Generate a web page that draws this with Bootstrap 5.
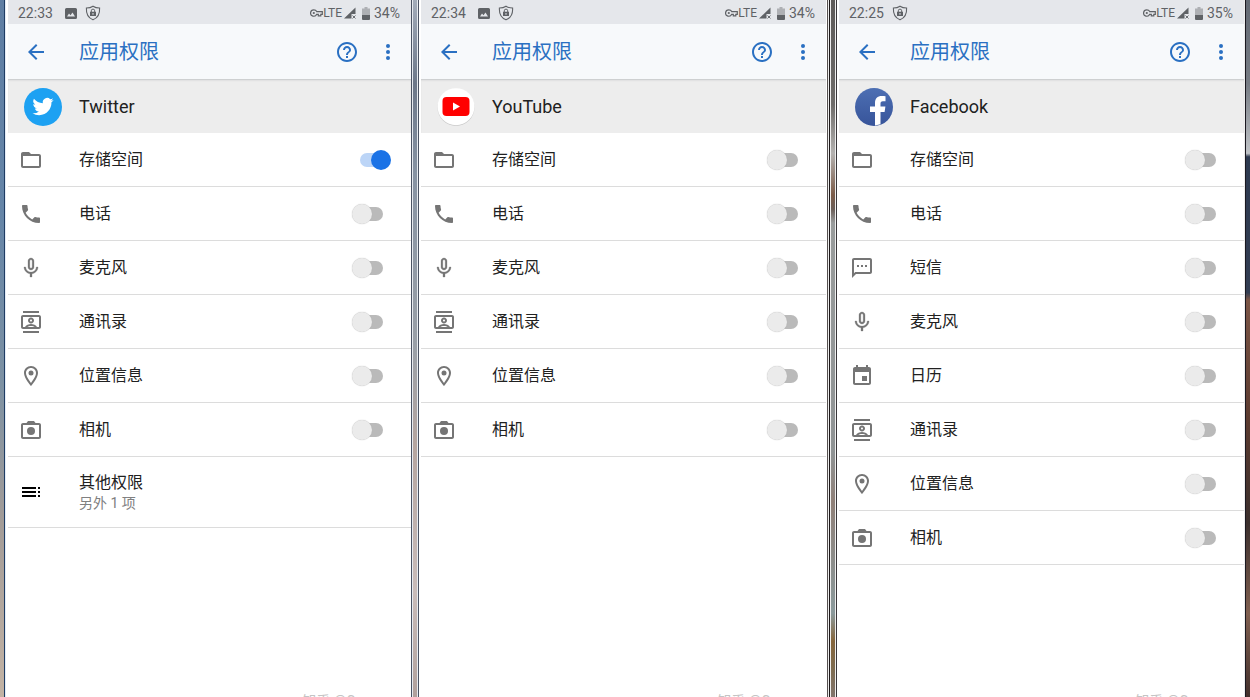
<!DOCTYPE html>
<html lang="zh-CN">
<head>
<meta charset="utf-8">
<meta name="viewport" content="width=device-width, initial-scale=1">
<title>应用权限</title>
<link rel="stylesheet" href="https://cdn.jsdelivr.net/npm/bootstrap@5.3.0/dist/css/bootstrap.min.css">
<style>
  body { font-family: Roboto, "Noto Sans CJK SC", sans-serif; color: #212121; background: #fff; }
  svg { display: block; flex: none; fill: currentColor; }
  .ico { width: 24px; height: 24px; }

  /* edges between the phones */
  .edge { flex: none; }
  .edge-start { width: 6px; border-right: 1px solid #e4ecf6; background: linear-gradient(90deg, transparent 4px, #1f3c63 4px), linear-gradient(#5f7ea3, #6585a8 30%, #7d91a3 55%, #a39c98 75%, #c3b3a4); }
  .edge-mid { width: 8px; border: solid #4a5263; border-width: 0 1px; background: linear-gradient(90deg, #e6eaf0 1px, transparent 1px 5px, #e6eaf0 5px), linear-gradient(#a3acba, #6c7789 12%, #8793a3 25%, #9aa0a8 50%, #b5a5a0 64%, #c9bcba 85%, #b0a09c); }
  .edge-dark { width: 11px; background: linear-gradient(90deg, #fff 1px, #55504f 1px 2px, #eee 2px 3px, #1e1a1a 3px 4px, #eee 4px 5px, transparent 5px 9px, #eee 9px 10px, #39373a 10px), linear-gradient(#5d5a58, #6d6b69 15%, #b4b2b0 22%, #7b5b48 28%, #6a5d57 30%, #999c9c 32%, #8f9394 65%, #8f8078 72%, #8b9a9c 88%, #85653b 92%, #7e6c50 96%, #82756d); }
  .edge-end { width: 6px; background: linear-gradient(90deg, #eee 1px, #1a1820 1px 2px, transparent 2px), linear-gradient(#636973, #777c84 12%, #c0c3c7 22%, #2e3a50 22.5%, #333d52 42%, #7b5546 43%, #5c3b30 60%, #3b2f2d 75%, #805f50 88%, #43302c); }

  .phone { flex-basis: 0; flex-shrink: 1; min-width: 0; padding-left: 2px; background: #fff; }
  .phone-a { flex-grow: 405; }
  .phone-b { flex-grow: 407; }

  .status { height: 24px; padding: 2px 11px 0 10px; background: #e5e7eb; color: #5f6266; font-size: 14px; line-height: 20px; }
  .status .net { font-size: 12px; margin-right: 2px; }
  .status .pic { margin-left: 12px; }
  .status .batt { margin: 0 4px 0 6px; }
  .appbar { height: 55px; padding: 0 11px 0 16px; background: #f7f9fb; color: #2a70c2; }
  .appbar h1 { font-size: 20px; line-height: 28px; font-weight: 400; margin: 0 0 0 31px; }
  .bar-btn { border: 0; padding: 0; background: none; color: inherit; }
  .bar-btn + .bar-btn { margin-left: 17px; }
  .who { height: 54px; padding: 1px 16px 0; background: #ededed; box-shadow: inset 0 2px 2px -1px #c4c6c8; }
  .who h2 { font-size: 18px; line-height: 24px; font-weight: 400; margin: 0 0 0 17px; padding-top: 1px; }

  .perm { height: 54px; padding: 0 20px 0 11px; border-bottom: 1px solid #dcdcdc; color: #757575; }
  .perm label, .perm a { margin-left: 36px; font-size: 16px; line-height: 22px; color: #212121; text-decoration: none; }
  .perm label { padding-top: 1px; }
  .perm-more { height: 71px; }
  .perm-more .ico { color: #000; }
  .perm-more small { display: block; font-size: 14px; line-height: 18px; color: #808080; }

  .perm .perm-switch { position: relative; flex: none; width: 39px; height: 20px; margin: 0; border: 0; background: none; }
  .perm-switch::before { content: ""; position: absolute; left: 8px; top: 3px; width: 23px; height: 14px; border-radius: 7px; background: #bababa; }
  .perm-switch::after { content: ""; position: absolute; left: 0; top: 0; width: 20px; height: 20px; border-radius: 50%; background: #ebebeb; box-shadow: 0 0 1px #aaa; }
  .perm-switch:checked::before { background: #bcd5f7; }
  .perm-switch:checked::after { left: 19px; background: #1a72e6; box-shadow: none; }

  .mark-zh { right: 48px; bottom: -14px; font-size: 14px; line-height: 20px; color: #c4c4c4; }
</style>
</head>
<body>
<svg width="0" height="0" class="position-absolute" aria-hidden="true">
  <symbol id="back" viewBox="0 0 24 24"><path d="M20 11H7.83l5.59-5.59L12 4l-8 8 8 8 1.41-1.41L7.83 13H20v-2z"/></symbol>
  <symbol id="help" viewBox="0 0 24 24"><path d="M11 18h2v-2h-2v2zm1-16C6.48 2 2 6.48 2 12s4.48 10 10 10 10-4.48 10-10S17.52 2 12 2zm0 18c-4.41 0-8-3.59-8-8s3.59-8 8-8 8 3.59 8 8-3.59 8-8 8zm0-14c-2.21 0-4 1.79-4 4h2c0-1.1.9-2 2-2s2 .9 2 2c0 2-3 1.75-3 5h2c0-2.25 3-2.5 3-5 0-2.21-1.79-4-4-4z"/></symbol>
  <symbol id="more" viewBox="0 0 24 24"><circle cx="12" cy="6" r="2"/><circle cx="12" cy="12" r="2"/><circle cx="12" cy="18" r="2"/></symbol>
  <symbol id="folder" viewBox="0 0 24 24"><path fill-rule="evenodd" d="M20 6h-8l-2-2H4c-1.100 0-2 .9-2 2v12c0 1.100.9 2 2 2h16c1.100 0 2-.9 2-2V8c0-1.100-.9-2-2-2zm0 12H4V8h16v10z"/></symbol>
  <symbol id="call" viewBox="0 0 24 24"><path d="M6.620 10.790c1.440 2.830 3.760 5.140 6.590 6.590l2.200-2.200c.27-.27.670-.36 1.020-.24 1.120.37 2.330.57 3.570.57.55 0 1 .45 1 1V20c0 .55-.45 1-1 1-9.390 0-17-7.610-17-17 0-.55.45-1 1-1h3.500c.55 0 1 .45 1 1 0 1.250.2 2.450.57 3.570.11.35.03.74-.25 1.020l-2.200 2.200z"/></symbol>
  <symbol id="mic" viewBox="0 0 24 24"><path d="M12 14c1.660 0 3-1.340 3-3V5c0-1.660-1.340-3-3-3S9 3.340 9 5v6c0 1.660 1.340 3 3 3zm-1.200-9.100c0-.66.54-1.200 1.200-1.200s1.200.54 1.200 1.200l-.01 6.200c0 .66-.53 1.200-1.190 1.200s-1.200-.54-1.200-1.200V4.900zm6.500 6.100c0 3-2.540 5.100-5.300 5.100S6.700 14 6.700 11H5c0 3.410 2.720 6.230 6 6.720V21h2v-3.280c3.280-.48 6-3.300 6-6.720h-1.700z" stroke="currentColor" stroke-width=".3"/></symbol>
  <symbol id="contacts" viewBox="0 0 24 24"><path d="M4 1h16v2H4zM4 21h16v2H4zM20 5H4c-1.100 0-2 .9-2 2v10c0 1.100.9 2 2 2h16c1.100 0 2-.9 2-2V7c0-1.100-.9-2-2-2zM8.210 17c.7-.47 2.250-1 3.790-1 1.550 0 3.090.53 3.790 1H8.210zM20 17h-2c-.7-1.990-3.970-3-6-3s-5.300 1.010-6 3H4V7h16v10z"/><path d="M12 13.500c1.650 0 3-1.350 3-3s-1.350-3-3-3-3 1.350-3 3 1.350 3 3 3zm0-4c.55 0 1 .45 1 1s-.45 1-1 1-1-.45-1-1 .45-1 1-1z"/></symbol>
  <symbol id="place" viewBox="0 0 24 24"><path d="M12 2C8.130 2 5 5.130 5 9c0 5.250 7 13 7 13s7-7.750 7-13c0-3.870-3.130-7-7-7zM7 9c0-2.760 2.240-5 5-5s5 2.240 5 5c0 2.880-2.880 7.190-5 9.880C9.920 16.210 7 11.850 7 9z"/><circle cx="12" cy="9" r="2.500"/></symbol>
  <symbol id="camera" viewBox="0 0 24 24"><path fill-rule="evenodd" d="M9 3h6l1.500 2H20c1.100 0 2 .9 2 2v12c0 1.100-.9 2-2 2H4c-1.100 0-2-.9-2-2V7c0-1.100.9-2 2-2h3.500zM4 7v12h16V7z"/><circle cx="12" cy="13" r="4"/></symbol>
  <symbol id="sms" viewBox="0 0 24 24"><path fill-rule="evenodd" d="M20 2H4c-1.100 0-2 .9-2 2v18l4-4h14c1.100 0 2-.9 2-2V4c0-1.100-.9-2-2-2zm0 14H5.200L4 17.200V4h16z"/><path d="M7 9h2v2H7zM11 9h2v2h-2zM15 9h2v2h-2z"/></symbol>
  <symbol id="event" viewBox="0 0 24 24"><path d="M17 12h-5v5h5v-5zM16 1v2H8V1H6v2H5c-1.110 0-1.990.9-1.990 2L3 19c0 1.100.89 2 2 2h14c1.100 0 2-.9 2-2V5c0-1.100-.9-2-2-2h-1V1h-2zm3 18H5V8h14v11z"/></symbol>
  <symbol id="toc" viewBox="0 0 24 24"><path d="M3 9h14V7H3v2zm0 4h14v-2H3v2zm0 4h14v-2H3v2zm16 0h2v-2h-2v2zm0-10v2h2V7h-2zm0 6h2v-2h-2v2z"/></symbol>
  <symbol id="pic" viewBox="0 0 12 11"><path fill-rule="evenodd" d="M1.500 0h9Q12 0 12 1.500v8Q12 11 10.500 11h-9Q0 11 0 9.500v-8Q0 0 1.500 0zM2 8.500h8L7.500 4.500 5.500 7.200 4 5.500z"/></symbol>
  <symbol id="shield" viewBox="0 0 16 16"><path d="M8 1.200C6 2.600 3.800 3 1.400 3c-.3 5 .8 9.500 6.600 11.800C13.800 12.500 14.900 8 14.600 3 12.200 3 10 2.600 8 1.200z" fill="none" stroke="currentColor" stroke-width="1.100"/><path d="M6.300 7V5.800a1.700 1.700 0 0 1 3.400 0V7" fill="none" stroke="currentColor" stroke-width="1"/><path fill-rule="evenodd" d="M5 6.700h6v4.300H5zM7.500 8v1.800h1V8z"/></symbol>
  <symbol id="vpn" viewBox="0 0 13 8"><path d="M3.800.8a3.200 3.200 0 1 0 2.900 4.500h1.600v1.600h2.500V5.300h1.500V2.600H6.700A3.200 3.200 0 0 0 3.800.8z" fill="none" stroke="currentColor" stroke-width="1.200"/><circle cx="3.800" cy="4" r="1.100"/></symbol>
  <symbol id="signal" viewBox="0 0 12 12"><path d="M11.500.5V7H7.500v4.500H0z"/><path d="M8.500 8.500l3 3M11.500 8.500l-3 3" stroke="currentColor" stroke-width=".9"/></symbol>
  <symbol id="battery" viewBox="0 0 8 13"><path d="M2.500 0h3v1.500H8V8H0V1.500h2.500z" fill="#aeb0b4"/><path d="M0 8h8v4q0 1-1 1H1q-1 0-1-1z"/></symbol>
</svg>

<div class="d-flex min-vh-100">
  <div class="edge edge-start"></div>

  <section class="phone phone-a position-relative overflow-hidden">
    <div class="status d-flex align-items-center">
      <span>22:33</span>
      <svg width="12" height="11" class="pic"><use href="#pic"/></svg>
      <svg width="16" height="16" class="ms-2"><use href="#shield"/></svg>
      <svg width="13" height="8" class="ms-auto"><use href="#vpn"/></svg>
      <span class="net">LTE</span>
      <svg width="12" height="12"><use href="#signal"/></svg>
      <svg width="8" height="13" class="batt"><use href="#battery"/></svg>
      <span>34%</span>
    </div>
    <header class="appbar d-flex align-items-center">
      <button class="bar-btn" type="button" aria-label="返回"><svg class="ico"><use href="#back"/></svg></button>
      <h1>应用权限</h1>
      <button class="bar-btn ms-auto" type="button" aria-label="帮助"><svg class="ico"><use href="#help"/></svg></button>
      <button class="bar-btn" type="button" aria-label="更多"><svg class="ico"><use href="#more"/></svg></button>
    </header>
    <div class="who d-flex align-items-center">
      <svg width="38" height="38" viewBox="0 0 38 38"><circle cx="19" cy="19" r="19" fill="#1da1f2"/><path transform="translate(8.500 8) scale(.88)" fill="#fff" d="M23.950 4.570a10 10 0 0 1-2.820.77 4.960 4.960 0 0 0 2.160-2.720c-.95.55-2 .95-3.130 1.180a4.920 4.920 0 0 0-8.380 4.480C7.690 8.100 4.070 6.130 1.640 3.160a4.920 4.920 0 0 0 1.520 6.570 4.900 4.900 0 0 1-2.230-.61v.06a4.920 4.920 0 0 0 3.950 4.830 5 5 0 0 1-2.210.08 4.940 4.940 0 0 0 4.600 3.420A9.870 9.870 0 0 1 0 19.540a13.990 13.990 0 0 0 7.550 2.210c9.050 0 14-7.500 14-13.980 0-.21 0-.42-.02-.63a9.940 9.940 0 0 0 2.460-2.550z"/></svg>
      <h2>Twitter</h2>
    </div>
    <ul class="list-unstyled mb-0">
      <li class="perm d-flex align-items-center"><svg class="ico"><use href="#folder"/></svg><label for="a1">存储空间</label><input class="form-check-input perm-switch ms-auto" type="checkbox" role="switch" id="a1" checked></li>
      <li class="perm d-flex align-items-center"><svg class="ico"><use href="#call"/></svg><label for="a2">电话</label><input class="form-check-input perm-switch ms-auto" type="checkbox" role="switch" id="a2"></li>
      <li class="perm d-flex align-items-center"><svg class="ico"><use href="#mic"/></svg><label for="a3">麦克风</label><input class="form-check-input perm-switch ms-auto" type="checkbox" role="switch" id="a3"></li>
      <li class="perm d-flex align-items-center"><svg class="ico"><use href="#contacts"/></svg><label for="a4">通讯录</label><input class="form-check-input perm-switch ms-auto" type="checkbox" role="switch" id="a4"></li>
      <li class="perm d-flex align-items-center"><svg class="ico"><use href="#place"/></svg><label for="a5">位置信息</label><input class="form-check-input perm-switch ms-auto" type="checkbox" role="switch" id="a5"></li>
      <li class="perm d-flex align-items-center"><svg class="ico"><use href="#camera"/></svg><label for="a6">相机</label><input class="form-check-input perm-switch ms-auto" type="checkbox" role="switch" id="a6"></li>
      <li class="perm perm-more d-flex align-items-center"><svg class="ico"><use href="#toc"/></svg><a href="#">其他权限<small>另外 1 项</small></a></li>
    </ul>
    <span class="mark-zh position-absolute">知乎 @Ca</span>
  </section>

  <div class="edge edge-mid"></div>

  <section class="phone phone-b position-relative overflow-hidden">
    <div class="status d-flex align-items-center">
      <span>22:34</span>
      <svg width="12" height="11" class="pic"><use href="#pic"/></svg>
      <svg width="16" height="16" class="ms-2"><use href="#shield"/></svg>
      <svg width="13" height="8" class="ms-auto"><use href="#vpn"/></svg>
      <span class="net">LTE</span>
      <svg width="12" height="12"><use href="#signal"/></svg>
      <svg width="8" height="13" class="batt"><use href="#battery"/></svg>
      <span>34%</span>
    </div>
    <header class="appbar d-flex align-items-center">
      <button class="bar-btn" type="button" aria-label="返回"><svg class="ico"><use href="#back"/></svg></button>
      <h1>应用权限</h1>
      <button class="bar-btn ms-auto" type="button" aria-label="帮助"><svg class="ico"><use href="#help"/></svg></button>
      <button class="bar-btn" type="button" aria-label="更多"><svg class="ico"><use href="#more"/></svg></button>
    </header>
    <div class="who d-flex align-items-center">
      <svg width="38" height="38" viewBox="0 0 38 38"><circle cx="19" cy="19.500" r="18.500" fill="#c9c9c9"/><circle cx="19" cy="18.700" r="18.500" fill="#fff"/><rect x="5.500" y="9" width="27" height="19" rx="4" fill="#f00"/><path d="M16 14.500v8l7-4z" fill="#fff"/></svg>
      <h2>YouTube</h2>
    </div>
    <ul class="list-unstyled mb-0">
      <li class="perm d-flex align-items-center"><svg class="ico"><use href="#folder"/></svg><label for="b1">存储空间</label><input class="form-check-input perm-switch ms-auto" type="checkbox" role="switch" id="b1"></li>
      <li class="perm d-flex align-items-center"><svg class="ico"><use href="#call"/></svg><label for="b2">电话</label><input class="form-check-input perm-switch ms-auto" type="checkbox" role="switch" id="b2"></li>
      <li class="perm d-flex align-items-center"><svg class="ico"><use href="#mic"/></svg><label for="b3">麦克风</label><input class="form-check-input perm-switch ms-auto" type="checkbox" role="switch" id="b3"></li>
      <li class="perm d-flex align-items-center"><svg class="ico"><use href="#contacts"/></svg><label for="b4">通讯录</label><input class="form-check-input perm-switch ms-auto" type="checkbox" role="switch" id="b4"></li>
      <li class="perm d-flex align-items-center"><svg class="ico"><use href="#place"/></svg><label for="b5">位置信息</label><input class="form-check-input perm-switch ms-auto" type="checkbox" role="switch" id="b5"></li>
      <li class="perm d-flex align-items-center"><svg class="ico"><use href="#camera"/></svg><label for="b6">相机</label><input class="form-check-input perm-switch ms-auto" type="checkbox" role="switch" id="b6"></li>
    </ul>
    <span class="mark-zh position-absolute">知乎 @Ca</span>
  </section>

  <div class="edge edge-dark"></div>

  <section class="phone phone-b position-relative overflow-hidden">
    <div class="status d-flex align-items-center">
      <span>22:25</span>
      <svg width="16" height="16" class="ms-2"><use href="#shield"/></svg>
      <svg width="13" height="8" class="ms-auto"><use href="#vpn"/></svg>
      <span class="net">LTE</span>
      <svg width="12" height="12"><use href="#signal"/></svg>
      <svg width="8" height="13" class="batt"><use href="#battery"/></svg>
      <span>35%</span>
    </div>
    <header class="appbar d-flex align-items-center">
      <button class="bar-btn" type="button" aria-label="返回"><svg class="ico"><use href="#back"/></svg></button>
      <h1>应用权限</h1>
      <button class="bar-btn ms-auto" type="button" aria-label="帮助"><svg class="ico"><use href="#help"/></svg></button>
      <button class="bar-btn" type="button" aria-label="更多"><svg class="ico"><use href="#more"/></svg></button>
    </header>
    <div class="who d-flex align-items-center">
      <svg width="38" height="38" viewBox="0 0 38 38"><defs><linearGradient id="fb" x1="0" y1="0" x2="0" y2="1"><stop offset="0" stop-color="#4d6fb3"/><stop offset="1" stop-color="#37549a"/></linearGradient></defs><circle cx="19" cy="19" r="19" fill="url(#fb)"/><path fill="#fff" d="M20 37.500V24h-5v-5.500h5V15c0-4.700 2.500-7 6.700-7 1.500 0 2.800.1 3.800.3v5h-2.600c-1.900 0-2.400 1-2.400 2.500v2.700h4.900l-.8 5.500h-4.100v12.300z"/></svg>
      <h2>Facebook</h2>
    </div>
    <ul class="list-unstyled mb-0">
      <li class="perm d-flex align-items-center"><svg class="ico"><use href="#folder"/></svg><label for="c1">存储空间</label><input class="form-check-input perm-switch ms-auto" type="checkbox" role="switch" id="c1"></li>
      <li class="perm d-flex align-items-center"><svg class="ico"><use href="#call"/></svg><label for="c2">电话</label><input class="form-check-input perm-switch ms-auto" type="checkbox" role="switch" id="c2"></li>
      <li class="perm d-flex align-items-center"><svg class="ico"><use href="#sms"/></svg><label for="c3">短信</label><input class="form-check-input perm-switch ms-auto" type="checkbox" role="switch" id="c3"></li>
      <li class="perm d-flex align-items-center"><svg class="ico"><use href="#mic"/></svg><label for="c4">麦克风</label><input class="form-check-input perm-switch ms-auto" type="checkbox" role="switch" id="c4"></li>
      <li class="perm d-flex align-items-center"><svg class="ico"><use href="#event"/></svg><label for="c5">日历</label><input class="form-check-input perm-switch ms-auto" type="checkbox" role="switch" id="c5"></li>
      <li class="perm d-flex align-items-center"><svg class="ico"><use href="#contacts"/></svg><label for="c6">通讯录</label><input class="form-check-input perm-switch ms-auto" type="checkbox" role="switch" id="c6"></li>
      <li class="perm d-flex align-items-center"><svg class="ico"><use href="#place"/></svg><label for="c7">位置信息</label><input class="form-check-input perm-switch ms-auto" type="checkbox" role="switch" id="c7"></li>
      <li class="perm d-flex align-items-center"><svg class="ico"><use href="#camera"/></svg><label for="c8">相机</label><input class="form-check-input perm-switch ms-auto" type="checkbox" role="switch" id="c8"></li>
    </ul>
    <span class="mark-zh position-absolute">知乎 @Ca</span>
  </section>

  <div class="edge edge-end"></div>
</div>
<script src="https://cdn.jsdelivr.net/npm/bootstrap@5.3.0/dist/js/bootstrap.bundle.min.js"></script>
</body>
</html>
